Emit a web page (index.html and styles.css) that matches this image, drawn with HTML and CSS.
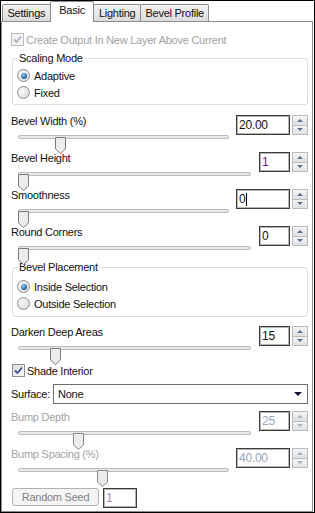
FILE: index.html
```html
<!DOCTYPE html>
<html lang="en">
<head>
    <meta charset="UTF-8">
    <title>Bevel - Basic</title>
    <link rel="stylesheet" href="styles.css">
</head>
<body>
    <div class="window">
        <div class="tabs">
            <div class="tab">Settings</div>
            <div class="tab tab-active">Basic</div>
            <div class="tab">Lighting</div>
            <div class="tab">Bevel Profile</div>
        </div>

        <div class="panel">
            <div class="check check-disabled check-output">
                <span class="box"><svg width="9" height="9" viewBox="0 0 9 9"><path d="M1 4.5 L3.5 7 L8 1.5" fill="none" stroke="#a9b1c6" stroke-width="1.8"/></svg></span>
                Create Output In New Layer Above Current
            </div>

            <fieldset class="group group-scaling">
                <legend>Scaling Mode</legend>
                <div class="radio"><span class="dot dot-on"></span>Adaptive</div>
                <div class="radio"><span class="dot"></span>Fixed</div>
            </fieldset>

            <div class="param param-first">
                <div class="param-left">
                    <div class="param-label">Bevel Width (%)</div>
                    <div class="slider slider-short">
                        <div class="track"></div>
                        <svg class="thumb" style="left: 37px" width="11" height="17" viewBox="0 0 11 17"><path d="M0.5 0.5 H10.5 V12 L5.5 16.5 L0.5 12 Z" fill="#ececec" stroke="#7b7b7b"/></svg>
                    </div>
                </div>
                <div class="spinner">
                    <div class="num num-wide">20.00</div>
                    <div class="spin"><span class="spin-btn"><i class="up"></i></span><span class="spin-btn"><i class="down"></i></span></div>
                </div>
            </div>

            <div class="param">
                <div class="param-left">
                    <div class="param-label">Bevel Height</div>
                    <div class="slider slider-long">
                        <div class="track"></div>
                        <svg class="thumb" style="left: 0px" width="11" height="17" viewBox="0 0 11 17"><path d="M0.5 0.5 H10.5 V12 L5.5 16.5 L0.5 12 Z" fill="#ececec" stroke="#7b7b7b"/></svg>
                    </div>
                </div>
                <div class="spinner">
                    <div class="num num-purple">1</div>
                    <div class="spin"><span class="spin-btn"><i class="up"></i></span><span class="spin-btn"><i class="down"></i></span></div>
                </div>
            </div>

            <div class="param">
                <div class="param-left">
                    <div class="param-label">Smoothness</div>
                    <div class="slider slider-short">
                        <div class="track"></div>
                        <svg class="thumb" style="left: 0px" width="11" height="17" viewBox="0 0 11 17"><path d="M0.5 0.5 H10.5 V12 L5.5 16.5 L0.5 12 Z" fill="#ececec" stroke="#7b7b7b"/></svg>
                    </div>
                </div>
                <div class="spinner">
                    <div class="num num-wide">0<span class="caret"></span></div>
                    <div class="spin"><span class="spin-btn"><i class="up"></i></span><span class="spin-btn"><i class="down"></i></span></div>
                </div>
            </div>

            <div class="param">
                <div class="param-left">
                    <div class="param-label">Round Corners</div>
                    <div class="slider slider-long">
                        <div class="track"></div>
                        <svg class="thumb" style="left: 0px" width="11" height="17" viewBox="0 0 11 17"><path d="M0.5 0.5 H10.5 V12 L5.5 16.5 L0.5 12 Z" fill="#ececec" stroke="#7b7b7b"/></svg>
                    </div>
                </div>
                <div class="spinner">
                    <div class="num">0</div>
                    <div class="spin"><span class="spin-btn"><i class="up"></i></span><span class="spin-btn"><i class="down"></i></span></div>
                </div>
            </div>

            <fieldset class="group group-placement">
                <legend>Bevel Placement</legend>
                <div class="radio"><span class="dot dot-on"></span>Inside Selection</div>
                <div class="radio"><span class="dot"></span>Outside Selection</div>
            </fieldset>

            <div class="param param-darken">
                <div class="param-left">
                    <div class="param-label">Darken Deep Areas</div>
                    <div class="slider slider-long">
                        <div class="track"></div>
                        <svg class="thumb" style="left: 32px" width="11" height="17" viewBox="0 0 11 17"><path d="M0.5 0.5 H10.5 V12 L5.5 16.5 L0.5 12 Z" fill="#ececec" stroke="#7b7b7b"/></svg>
                    </div>
                </div>
                <div class="spinner">
                    <div class="num">15</div>
                    <div class="spin"><span class="spin-btn"><i class="up"></i></span><span class="spin-btn"><i class="down"></i></span></div>
                </div>
            </div>

            <div class="check check-shade">
                <span class="box"><svg width="9" height="9" viewBox="0 0 9 9"><path d="M1 4.5 L3.5 7 L8 1.5" fill="none" stroke="#3d4f8e" stroke-width="1.8"/></svg></span>
                Shade Interior
            </div>

            <div class="surface">
                <span class="surface-label">Surface:</span>
                <div class="dropdown">None<i class="drop-arrow"></i></div>
            </div>

            <div class="param param-disabled param-bump">
                <div class="param-left">
                    <div class="param-label">Bump Depth</div>
                    <div class="slider slider-long">
                        <div class="track"></div>
                        <svg class="thumb" style="left: 55px" width="11" height="17" viewBox="0 0 11 17"><path d="M0.5 0.5 H10.5 V12 L5.5 16.5 L0.5 12 Z" fill="#ececec" stroke="#8a8a8a"/></svg>
                    </div>
                </div>
                <div class="spinner">
                    <div class="num">25</div>
                    <div class="spin"><span class="spin-btn"><i class="up"></i></span><span class="spin-btn"><i class="down"></i></span></div>
                </div>
            </div>

            <div class="param param-disabled">
                <div class="param-left">
                    <div class="param-label">Bump Spacing (%)</div>
                    <div class="slider slider-short">
                        <div class="track"></div>
                        <svg class="thumb" style="left: 79px" width="11" height="17" viewBox="0 0 11 17"><path d="M0.5 0.5 H10.5 V12 L5.5 16.5 L0.5 12 Z" fill="#ececec" stroke="#8a8a8a"/></svg>
                    </div>
                </div>
                <div class="spinner">
                    <div class="num num-wide">40.00</div>
                    <div class="spin"><span class="spin-btn"><i class="up"></i></span><span class="spin-btn"><i class="down"></i></span></div>
                </div>
            </div>

            <div class="seed">
                <div class="seed-btn">Random Seed</div>
                <div class="num num-seed">1</div>
            </div>
        </div>
    </div>
</body>
</html>
```

FILE: styles.css
```css
body {
    margin: 0;
    padding: 0;
    font-family: 'Liberation Sans', Arial, sans-serif;
    font-size: 11px;
    letter-spacing: -0.25px;
    color: #111;
    background: #fff;
}
.window {
    width: 315px;
    height: 513px;
    box-sizing: border-box;
    border: 1px solid #000;
    display: flex;
    flex-direction: column;
    background: #fff;
}

/* tab strip */
.tabs {
    display: flex;
    align-items: flex-end;
    height: 20px;
    padding-left: 1px;
}
.tab {
    height: 16px;
    line-height: 17px;
    padding: 0 4.5px;
    border: 1px solid #898c95;
    border-bottom: none;
    border-radius: 2px 2px 0 0;
    background: linear-gradient(#f2f2f2, #dcdcdc);
    margin-right: -1px;
}
.tab-active {
    height: 20px;
    line-height: 17px;
    background: #fff;
    padding: 0 8.5px;
    margin-bottom: -1px;
    position: relative;
    z-index: 1;
}

/* page under tabs */
.panel {
    flex: 1;
    border: 1px solid #898c95;
    margin-right: 1px;
    padding: 9px 4px 0 9px;
}

/* checkboxes */
.check {
    display: flex;
    align-items: center;
    height: 17px;
    gap: 2px;
}
.check-disabled {
    color: #a3a3a3;
}
.check-shade {
    margin-top: 4px;
    margin-left: 1px;
}
.box {
    width: 11px;
    height: 11px;
    border: 1px solid #8e8f8f;
    background: linear-gradient(135deg, #dcdcdc, #fbfbfb);
    display: flex;
    align-items: center;
    justify-content: center;
}
.check-disabled .box {
    border-color: #bcbcbc;
    background: #f4f4f4;
}

/* group boxes */
.group {
    margin: 3px 0 0 1px;
    padding: 2px 4px 3px 4px;
    border: 1px solid #d5dfe5;
    border-radius: 3px;
    min-width: 0;
}
.group legend {
    padding: 0 2px;
    line-height: 14px;
}
.group-placement {
    margin-top: 2px;
    padding-top: 4px;
    padding-bottom: 4px;
}
.radio {
    display: flex;
    align-items: center;
    gap: 4px;
    height: 17px;
}
.dot {
    width: 11px;
    height: 11px;
    border: 1px solid #8e8f8f;
    border-radius: 50%;
    background: radial-gradient(circle at 35% 35%, #fbfbfb, #d4d4d4);
    display: flex;
    align-items: center;
    justify-content: center;
}
.dot-on::after {
    content: '';
    width: 6px;
    height: 6px;
    border-radius: 50%;
    background: radial-gradient(circle at 40% 35%, #8cc8f0, #1a5fa0 70%, #0c3e78);
}

/* slider + number rows */
.param {
    display: grid;
    grid-template-columns: 1fr auto;
    height: 32px;
    margin-top: 5px;
}
.param-first {
    margin-top: 10px;
}
.param-darken {
    margin-top: 9px;
}
.param-bump {
    margin-top: 7px;
}
.param-label {
    line-height: 13px;
}
.param-disabled .param-label {
    color: #a3a3a3;
}
.slider {
    position: relative;
    height: 18px;
    margin: 1px 0 0 7px;
}
.slider-short {
    width: 211px;
}
.slider-long {
    width: 233px;
}
.track {
    height: 2px;
    margin-top: 7px;
    border: 1px solid #bcbcbc;
    border-radius: 2px;
    background: #e8e9ea;
}
.thumb {
    position: absolute;
    top: 2px;
}
.spinner {
    display: flex;
    gap: 2px;
    align-items: flex-start;
}
.num {
    width: 31px;
    height: 20px;
    box-sizing: border-box;
    border: 1px solid #3c3c3c;
    box-shadow: inset 0 0 0 1px #b4b4b4;
    padding-left: 2px;
    line-height: 18px;
    font-size: 12px;
    background: #fff;
    display: flex;
    align-items: center;
}
.num-wide {
    width: 54px;
}
.num-purple {
    color: #6a1a8a;
}
.param-disabled .num {
    color: #98a6ba;
}
.caret {
    width: 1px;
    height: 13px;
    background: #000;
    margin-left: 1px;
}
.spin {
    width: 16px;
    height: 20px;
    display: flex;
    flex-direction: column;
}
.spin-btn {
    flex: 1;
    border: 1px solid #b7bbc1;
    background: linear-gradient(#f5f5f5, #dfe1e3);
    display: flex;
    align-items: center;
    justify-content: center;
}
.spin-btn + .spin-btn {
    border-top: none;
}
.up, .down {
    width: 0;
    height: 0;
    border-left: 3px solid transparent;
    border-right: 3px solid transparent;
}
.up {
    border-bottom: 3px solid #5b6f90;
}
.down {
    border-top: 3px solid #5b6f90;
}
.param-disabled .up {
    border-bottom-color: #a8b2c0;
}
.param-disabled .down {
    border-top-color: #a8b2c0;
}

/* surface dropdown */
.surface {
    display: flex;
    align-items: center;
    gap: 3px;
    margin-top: 5px;
    height: 20px;
}
.dropdown {
    flex: 1;
    height: 20px;
    box-sizing: border-box;
    border: 1px solid #6f6f6f;
    padding: 0 5px 0 4px;
    display: flex;
    align-items: center;
    justify-content: space-between;
}
.drop-arrow {
    width: 0;
    height: 0;
    border-left: 4px solid transparent;
    border-right: 4px solid transparent;
    border-top: 4px solid #141838;
}

/* seed row */
.seed {
    display: flex;
    align-items: flex-start;
    gap: 4px;
    margin-top: 8px;
    margin-left: 1px;
}
.seed-btn {
    width: 87px;
    height: 18px;
    box-sizing: border-box;
    border: 1px solid #adb2b5;
    border-radius: 3px;
    background: #f4f4f4;
    color: #838383;
    text-align: center;
    line-height: 16px;
}
.num-seed {
    width: 34px;
    color: #a48cc0;
}
```
